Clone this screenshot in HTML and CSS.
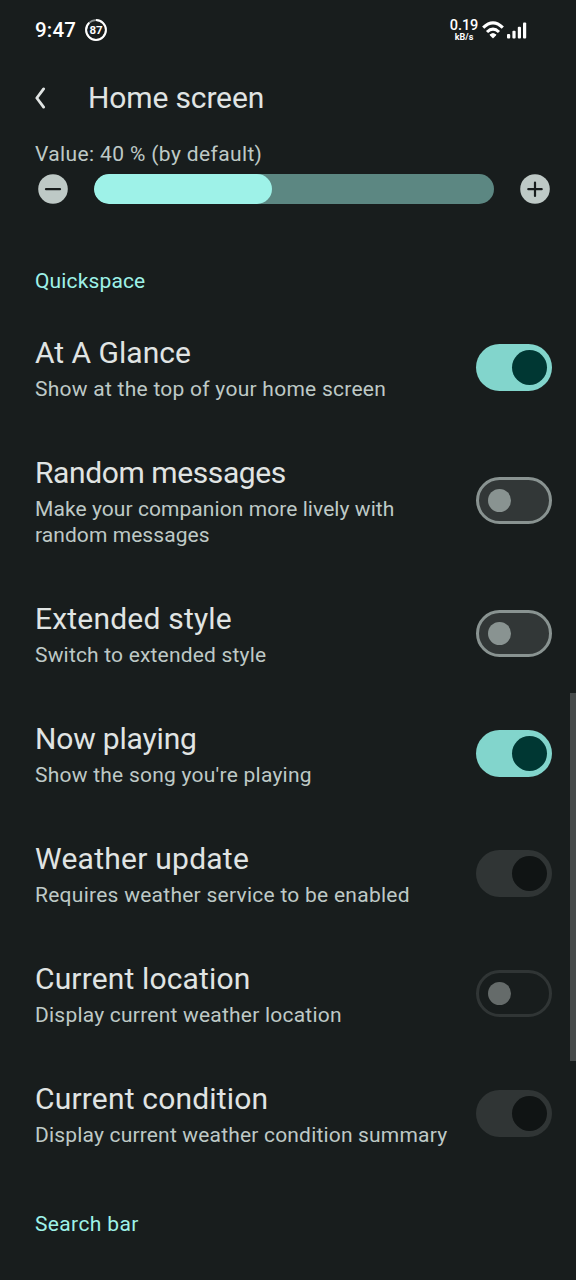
FILE: index.html
```html
<!DOCTYPE html>
<html lang="en">
<head>
<meta charset="utf-8">
<title>Home screen</title>
<link rel="stylesheet" href="styles.css">
</head>
<body>
<div class="screen">
  <header class="status">
    <div class="status-left">
      <span class="clock">9:47</span>
      <span class="battery">
        <svg class="battery-ring" viewBox="0 0 22 22"><circle cx="11" cy="11" r="9.9" fill="none" stroke="#8b9292" stroke-width="1.6"/><circle cx="11" cy="11" r="9.9" fill="none" stroke="#fff" stroke-width="2" pathLength="100" stroke-dasharray="88 12" transform="rotate(-90 11 11)"/></svg>
        <span class="battery-level">87</span>
      </span>
    </div>
    <div class="status-right">
      <div class="speed"><span class="speed-value">0.19</span><span class="speed-unit">kB/s</span></div>
      <svg class="wifi" viewBox="0 0 22 18"><g fill="none" stroke="#fff" stroke-width="3.1"><path d="M1.2 6.6Q11-3 20.8 6.6"/><path d="M5 11Q11 5.2 17 11"/></g><path d="M7.9 13.8Q11 11 14.1 13.8L11.7 16.6Q11 17.2 10.3 16.6Z" fill="#fff" stroke="#fff" stroke-width="0.8" stroke-linejoin="round"/></svg>
      <svg class="signal" viewBox="0 0 20 17"><g fill="#fff"><rect x="0" y="12" width="3.2" height="4.5" rx="1"/><rect x="5.4" y="8.7" width="3.2" height="7.8" rx="1"/><rect x="10.8" y="4.7" width="3.2" height="11.8" rx="1"/><rect x="16" y="0.5" width="3.2" height="16" rx="1"/></g></svg>
    </div>
  </header>
  <div class="toolbar">
    <svg class="back" viewBox="0 0 12 22"><path d="M9.6 1.9 2.8 11l6.8 9.1" fill="none" stroke="#e0e4e3" stroke-width="2.8" stroke-linecap="round" stroke-linejoin="round"/></svg>
    <h1 class="heading">Home screen</h1>
  </div>
  <div class="value">Value: 40 % (by default)</div>
  <div class="slider-row">
    <svg class="round" viewBox="0 0 30 30"><circle cx="15" cy="15" r="14.8" fill="#bec9c6"/><path d="M8 15.2h14" stroke="#181d1d" stroke-width="2.2" stroke-linecap="round"/></svg>
    <div class="track"><div class="fill"></div></div>
    <svg class="round" viewBox="0 0 30 30"><circle cx="15" cy="15" r="14.8" fill="#bec9c6"/><path d="M8.3 15.2h13.4M15 8.5v13.4" stroke="#181d1d" stroke-width="2.2" stroke-linecap="round"/></svg>
  </div>
  <h2 class="section quick">Quickspace</h2>
  <main class="list">
    <div class="row"><div class="copy"><div class="title t1">At A Glance</div><div class="summary s1">Show at the top of your home screen</div></div><div class="switch on"><i class="thumb"></i></div></div>
    <div class="row"><div class="copy"><div class="title t2">Random messages</div><div class="summary s2">Make your companion more lively with<br>random messages</div></div><div class="switch off"><i class="thumb"></i></div></div>
    <div class="row"><div class="copy"><div class="title t3">Extended style</div><div class="summary s3">Switch to extended style</div></div><div class="switch off"><i class="thumb"></i></div></div>
    <div class="row"><div class="copy"><div class="title t4">Now playing</div><div class="summary s4">Show the song you're playing</div></div><div class="switch on"><i class="thumb"></i></div></div>
    <div class="row"><div class="copy"><div class="title t5">Weather update</div><div class="summary s5">Requires weather service to be enabled</div></div><div class="switch on disabled"><i class="thumb"></i></div></div>
    <div class="row"><div class="copy"><div class="title t6">Current location</div><div class="summary s6">Display current weather location</div></div><div class="switch off disabled"><i class="thumb"></i></div></div>
    <div class="row"><div class="copy"><div class="title t7">Current condition</div><div class="summary s7">Display current weather condition summary</div></div><div class="switch on disabled"><i class="thumb"></i></div></div>
  </main>
  <h2 class="section search">Search bar</h2>
  <div class="scrollbar"></div>
</div>
</body>
</html>
```
FILE: styles.css
```css
* { box-sizing: border-box; }
body { margin: 0; background: #181d1d; }
.screen { position: relative; width: 576px; height: 1280px; overflow: hidden; background: #181d1d; color: #e0e4e3; font-family: Roboto, "Liberation Sans", sans-serif; display: flex; flex-direction: column; white-space: nowrap; }
h1, h2 { margin: 0; font-weight: 400; }
svg { display: block; flex: none; }

.status { height: 60px; padding: 0 49px 0 35px; display: flex; justify-content: space-between; align-items: center; color: #fff; }
.status-left, .status-right { display: flex; align-items: center; }
.clock { font-size: 20.5px; font-weight: 500; line-height: 24px; width: 50px; letter-spacing: 0.2px; }
.battery { display: grid; place-items: center; width: 22px; height: 22px; }
.battery-ring, .battery-level { grid-area: 1 / 1; }
.battery-ring { width: 22px; height: 22px; }
.battery-level { font-size: 11.5px; font-weight: 700; line-height: 22px; }
.speed { display: flex; flex-direction: column; align-items: center; width: 28px; margin-right: 4px; font-weight: 500; }
.speed-value { font-size: 14.5px; line-height: 13px; letter-spacing: -0.1px; }
.speed-unit { font-size: 9px; line-height: 10px; font-weight: 700; }
.wifi { width: 22px; height: 18px; margin-right: 3px; }
.signal { width: 20px; height: 17px; }

.toolbar { height: 76px; padding-left: 34px; display: flex; align-items: center; }
.back { width: 12px; height: 22px; margin-right: 42px; }
.heading { font-size: 30px; line-height: 36px; letter-spacing: -0.14px; }
.value { height: 36px; padding: 5px 0 0 35px; font-size: 21px; line-height: 26px; color: #bec9c6; letter-spacing: 0.37px; }
.slider-row { height: 34px; padding: 0 26px 0 38px; display: flex; align-items: center; justify-content: space-between; }
.round { width: 30px; height: 30px; }
.track { width: 400px; height: 30px; border-radius: 15px; background: #5c8782; overflow: hidden; }
.fill { width: 178px; height: 30px; border-radius: 15px; background: #9ef2e8; }

.section { padding-left: 35px; font-size: 21px; line-height: 26px; color: #9ef2e8; }
.quick { height: 102px; padding-top: 62px; letter-spacing: 0.14px; }
.search { padding-top: 37px; letter-spacing: 0.36px; }
.row { display: flex; align-items: center; justify-content: space-between; padding: 27px 24px 26px 35px; }
.title { font-size: 30px; line-height: 36px; margin-bottom: 5px; }
.summary { font-size: 21px; line-height: 26px; color: #bec9c6; }
.t2 { letter-spacing: -0.4px; }
.t3 { letter-spacing: 0.2px; }
.t4 { letter-spacing: -0.17px; }
.t5 { letter-spacing: 0.25px; }
.t6 { letter-spacing: 0.15px; }
.t7 { letter-spacing: 0.18px; }
.s1 { letter-spacing: 0.26px; }
.s2 { letter-spacing: 0.07px; }
.s3 { letter-spacing: 0.18px; }
.s4 { letter-spacing: 0.24px; }
.s5 { letter-spacing: 0.26px; }
.s6 { letter-spacing: 0.22px; }
.s7 { letter-spacing: 0.18px; }

.switch { width: 76px; height: 47px; margin-top: -2px; border-radius: 24px; display: flex; align-items: center; flex: none; }
.thumb { display: block; border-radius: 50%; }
.on { background: #82d5cc; justify-content: flex-end; padding-right: 5px; }
.on .thumb { width: 35px; height: 35px; background: #003733; }
.off { background: #323737; border: 3px solid #899391; padding-left: 9px; }
.off .thumb { width: 23px; height: 23px; background: #899391; }
.on.disabled { background: #303535; }
.on.disabled .thumb { background: #101414; }
.off.disabled { background: #181d1d; border-color: #303535; }
.off.disabled .thumb { background: #656b6a; }
.scrollbar { position: absolute; right: 0; top: 693px; width: 6px; height: 368px; background: #464a4a; }
```
